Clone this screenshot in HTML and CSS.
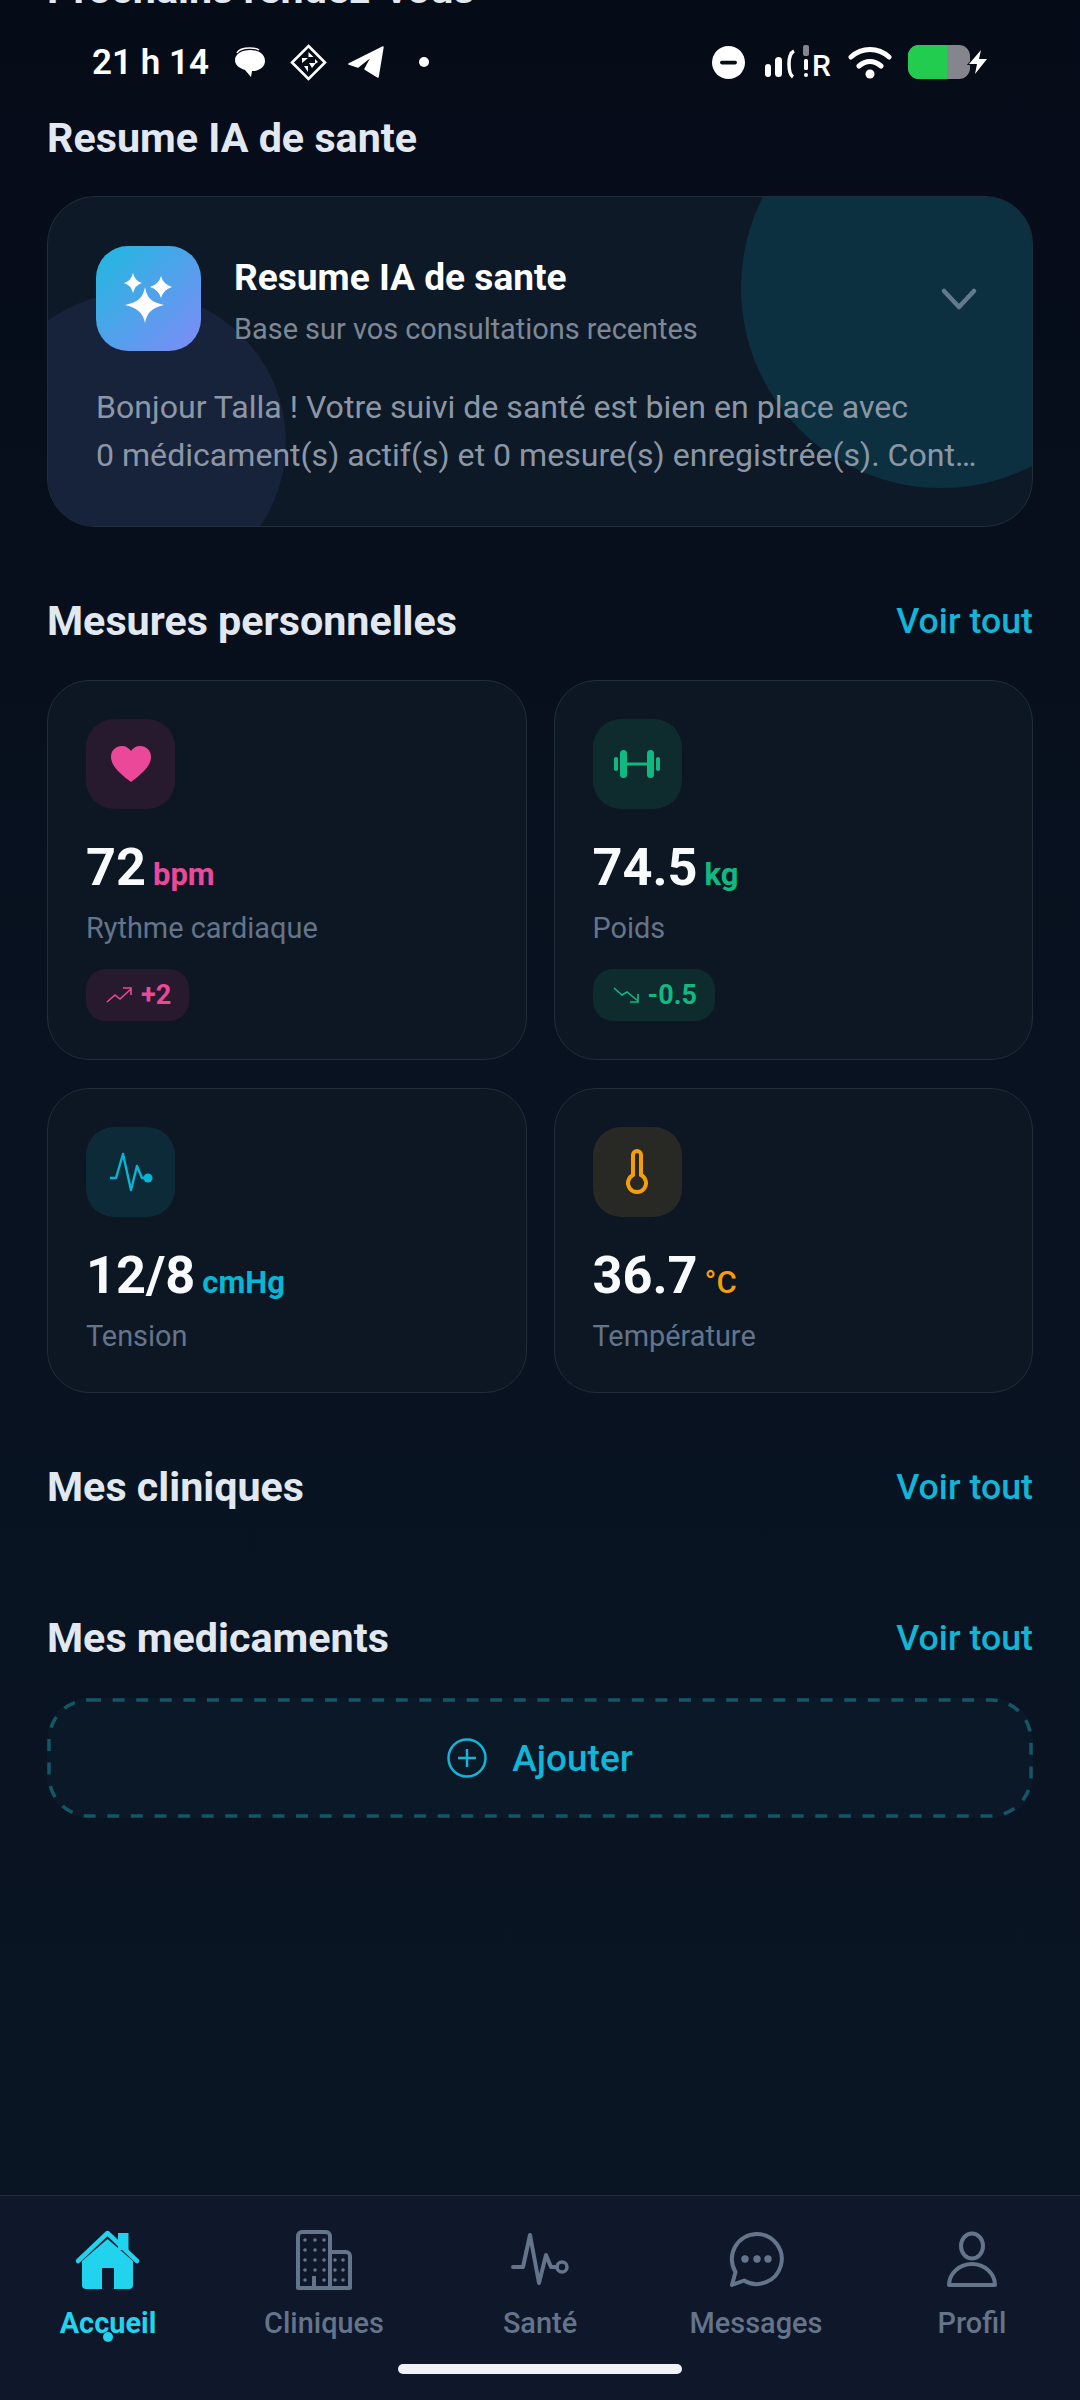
FILE: index.html
```html
<!doctype html>
<html lang="fr">
<head>
<meta charset="utf-8">
<title>Accueil</title>
<link rel="stylesheet" href="styles.css">
</head>
<body>

<!-- barre d'etat, au dessus du contenu qui defile -->
<div class="statusbar">
  <span class="time">21 h 14</span>
  <svg class="st-chat" width="30" height="30" viewBox="0 0 30 30"><path d="M2 6C4 2 9 1 15 1c4 0 7 0 9 2" fill="none" stroke="#fff" stroke-width="1.6"/><path d="M15 3c8 0 15 4 15 11 0 6-6 10-12 10h-1l-1 6-6-7C4 21 0 18 0 13 0 7 7 3 15 3z" fill="#fff"/></svg>
  <svg class="st-diamond" width="37" height="37" viewBox="0 0 37 37"><path d="M18.500 2 35 18.500 18.500 35 2 18.500z" fill="none" stroke="#fff" stroke-width="2.600"/><path d="M18.500 8l5 5h-5zM12 14h6l-6 5zM19 19h7l-4 5zM14 22l4 0 0 6zM25 15l3 3-3 2z" fill="#fff"/></svg>
  <svg class="st-plane" width="37" height="32" viewBox="0 0 37 32"><path d="M1 18 35 1 30 31 17 23 24 10 10 21z" fill="#fff" stroke="#fff" stroke-width="1.500" stroke-linejoin="round"/></svg>
  <span class="st-dot"></span>

  <div class="st-right">
    <svg width="33" height="33" viewBox="0 0 33 33"><circle cx="16.500" cy="16.500" r="16.500" fill="#fff"/><rect x="8" y="14.800" width="17" height="3.600" rx="1.800" fill="#060b18"/></svg>
    <div class="st-signal">
      <svg width="46" height="34" viewBox="0 0 46 34"><rect x="1" y="19" width="6" height="13" rx="3" fill="#fff"/><rect x="11" y="12" width="7" height="20" rx="3.500" fill="#fff"/><path d="M30 6c-4 2-5 7-5 13s1 11 4 13" fill="none" stroke="#fff" stroke-width="3.500"/><rect x="39" y="0" width="6" height="11" rx="2" fill="#85858d"/><rect x="40" y="14" width="4" height="11" rx="1.500" fill="#fff"/><rect x="40" y="28" width="4" height="4" rx="2" fill="#fff"/></svg>
      <span class="st-r">R</span>
    </div>
    <svg width="44" height="33" viewBox="0 0 44 33"><path d="M3 11C14 1 30 1 41 11M11 20c7-6 15-6 22 0" fill="none" stroke="#fff" stroke-width="5" stroke-linecap="round"/><circle cx="22" cy="28" r="4.500" fill="#fff"/></svg>
    <div class="battery"><div class="battery-fill"></div></div>
    <svg class="st-bolt" width="24" height="28" viewBox="0 0 24 28"><path d="M15 2 3 16h8l-2 10 12-15h-8z" fill="#fff" stroke="#060b18" stroke-width="2" paint-order="stroke"/></svg>
  </div>
</div>

<div class="scroll">

  <h2 class="section-title">Prochains rendez-vous</h2>

  <h2 class="section-title ai-title">Resume IA de sante</h2>

  <div class="ai-card">
    <div class="blob blob-teal"></div>
    <div class="blob blob-navy"></div>
    <div class="ai-head">
      <div class="ai-icon">
        <svg width="105" height="105" viewBox="0 0 105 105"><path d="M49 41C51 52 55 56 68 59 55 62 51 67 49 77 47 67 42 62 29 59 42 56 47 52 49 41z" fill="#fff"/><path d="M37 27Q39 35 46 37 39 39 37 47 35 39 28 37 35 35 37 27z" fill="#fff"/><path d="M65 30Q67 38 76 41 67 44 65 52 63 44 54 41 63 38 65 30z" fill="#fff"/></svg>
      </div>
      <div class="ai-text">
        <div class="ai-name">Resume IA de sante</div>
        <div class="ai-sub">Base sur vos consultations recentes</div>
      </div>
      <svg class="ai-chevron" width="48" height="48" viewBox="0 0 48 48"><path d="M8 16 23 32 38 16" fill="none" stroke="#64798a" stroke-width="4.500" stroke-linecap="round" stroke-linejoin="round"/></svg>
    </div>
    <div class="ai-body">
      <div class="ai-line">Bonjour Talla ! Votre suivi de santé est bien en place avec</div>
      <div class="ai-line">0 médicament(s) actif(s) et 0 mesure(s) enregistrée(s). Continuez ainsi.</div>
    </div>
  </div>

  <div class="section-head">
    <h2 class="section-title">Mesures personnelles</h2>
    <span class="see-all">Voir tout</span>
  </div>

  <div class="metrics">
    <div class="metric">
      <div class="metric-icon bg-pink">
        <svg width="40" height="36" viewBox="0 0 40 36"><path d="M20 36C12 30 0 21 0 11 0 4 5 0 11 0c4 0 7 2 9 5 2-3 5-5 9-5 6 0 11 4 11 11 0 10-12 19-20 25z" fill="#ec4899"/></svg>
      </div>
      <div class="metric-value">72<span class="unit c-pink">bpm</span></div>
      <div class="metric-label">Rythme cardiaque</div>
      <div class="trend bg-pink c-pink">
        <svg width="26" height="16" viewBox="0 0 26 16"><path d="M1 15 9 8l5 4L25 2M17 1h8v7" fill="none" stroke="#ec4899" stroke-width="1.600"/></svg>
        +2
      </div>
    </div>

    <div class="metric">
      <div class="metric-icon bg-green">
        <svg width="46" height="28" viewBox="0 0 46 28"><g fill="#10b981"><rect x="0" y="7" width="4" height="14" rx="2"/><rect x="6" y="0" width="7" height="28" rx="3.500"/><rect x="12" y="12.500" width="22" height="3"/><rect x="33" y="0" width="7" height="28" rx="3.500"/><rect x="42" y="7" width="4" height="14" rx="2"/></g></svg>
      </div>
      <div class="metric-value">74.5<span class="unit c-green">kg</span></div>
      <div class="metric-label">Poids</div>
      <div class="trend bg-green c-green">
        <svg width="26" height="16" viewBox="0 0 26 16"><path d="M1 1l8 7 5-3 11 9M25 7v8h-8" fill="none" stroke="#10b981" stroke-width="1.600"/></svg>
        -0.5
      </div>
    </div>

    <div class="metric">
      <div class="metric-icon bg-cyan">
        <svg width="44" height="40" viewBox="0 0 44 40"><path d="M1 26h6L14 2l8 36 6-24 5 12h5" fill="none" stroke="#06b6d4" stroke-width="2.400" stroke-linejoin="round"/><circle cx="39" cy="26" r="4.500" fill="#06b6d4"/></svg>
      </div>
      <div class="metric-value">12/8<span class="unit c-cyan">cmHg</span></div>
      <div class="metric-label">Tension</div>
    </div>

    <div class="metric">
      <div class="metric-icon bg-amber">
        <svg width="22" height="46" viewBox="0 0 22 46"><path d="M7 26V6a4 4 0 0 1 8 0v20a9 9 0 1 1-8 0z" fill="none" stroke="#f59e0b" stroke-width="4"/></svg>
      </div>
      <div class="metric-value">36.7<span class="unit c-amber thin">°C</span></div>
      <div class="metric-label">Température</div>
    </div>
  </div>

  <div class="section-head">
    <h2 class="section-title">Mes cliniques</h2>
    <span class="see-all">Voir tout</span>
  </div>
  <div class="clinic-list"></div>

  <div class="section-head">
    <h2 class="section-title">Mes medicaments</h2>
    <span class="see-all">Voir tout</span>
  </div>

  <div class="add-btn">
    <svg class="add-dash" width="986" height="120" viewBox="0 0 986 120"><rect x="2" y="2" width="982" height="116" rx="40" fill="none" stroke="#135666" stroke-width="3.500" stroke-dasharray="12 11.600"/></svg>
    <svg width="40" height="40" viewBox="0 0 40 40"><circle cx="20" cy="20" r="18.500" fill="none" stroke="#12b5d6" stroke-width="2.500"/><path d="M20 11v18M11 20h18" stroke="#12b5d6" stroke-width="2.500"/></svg>
    Ajouter
  </div>

</div>

<nav class="tabbar">
  <div class="tabs">
    <div class="tab tab-active">
      <svg width="64" height="60" viewBox="0 0 64 60"><path d="M42 3h10.500v17H42z" fill="#22d3ee"/><path d="M2 31 31.500 3 61 31" fill="none" stroke="#22d3ee" stroke-width="4.500" stroke-linecap="round" stroke-linejoin="round" /><path fill-rule="evenodd" d="M6 31 31.500 9 57 31v24a4 4 0 0 1-4 4H10a4 4 0 0 1-4-4zM26 38h12v21H26z" fill="#22d3ee"/></svg>
      <span>Accueil</span>
      <i class="tab-dot"></i>
    </div>
    <div class="tab">
      <svg width="60" height="60" viewBox="0 0 60 60"><g fill="none" stroke="#64748b"><path d="M4 58V6a4 4 0 0 1 4-4h24a4 4 0 0 1 4 4v52zM36 22h16a4 4 0 0 1 4 4v32H36z" stroke-width="4" stroke-linejoin="round"/><path d="M20 46v10" stroke-width="4"/><path d="M11 10h0M21 10h0M30 10h0M11 20h0M21 20h0M30 20h0M11 30h0M21 30h0M30 30h0M11 40h0M21 40h0M30 40h0M11 50h0M30 50h0M41 30h0M49 30h0M41 40h0M49 40h0M41 50h0M49 50h0" stroke-width="3.600" stroke-linecap="round"/></g></svg>
      <span>Cliniques</span>
    </div>
    <div class="tab">
      <svg width="60" height="60" viewBox="0 0 60 60"><path d="M3 37h10l7-32 9 48 7-28 5 12h6" fill="none" stroke="#64748b" stroke-width="4" stroke-linecap="round" stroke-linejoin="round"/><circle cx="52" cy="37" r="5" fill="none" stroke="#64748b" stroke-width="3.500"/></svg>
      <span>Santé</span>
    </div>
    <div class="tab">
      <svg width="60" height="60" viewBox="0 0 60 60"><path d="M31 4A25 25 0 1 1 18 50.500L6 55 9.500 42A25 25 0 0 1 31 4z" fill="none" stroke="#64748b" stroke-width="4" stroke-linejoin="round"/><circle cx="19" cy="29" r="3.700" fill="#64748b"/><circle cx="31" cy="29" r="3.700" fill="#64748b"/><circle cx="42" cy="29" r="3.700" fill="#64748b"/></svg>
      <span>Messages</span>
    </div>
    <div class="tab">
      <svg width="60" height="60" viewBox="0 0 60 60"><ellipse cx="30" cy="16" rx="11" ry="12.500" fill="none" stroke="#64748b" stroke-width="4"/><path d="M7 55A23 21 0 0 1 53 55z" fill="none" stroke="#64748b" stroke-width="4" stroke-linejoin="round"/></svg>
      <span>Profil</span>
    </div>
  </div>
  <div class="home-bar"></div>
</nav>

</body>
</html>
```

FILE: styles.css
```css
*{
box-sizing:border-box;
}
html,body{
margin:0;
height:2400px;
}
body{
position:relative;
display:flex;
flex-direction:column;
overflow:hidden;
color:#fff;
background:linear-gradient(180deg,#060b18 0%,#081220 45%,#0a1524 100%);
font-family:Roboto,"Noto Sans",sans-serif;
}

/* barre d'etat */
.statusbar{
position:absolute;
top:0;
left:0;
right:0;
height:124px;
padding:0 90px 0 92px;
display:flex;
align-items:center;
}
.time{
font-size:35px;
font-weight:600;
}
.st-chat{
margin-left:26px;
}
.st-diamond{
margin-left:25px;
}
.st-plane{
margin-left:21px;
}
.st-dot{
width:10px;
height:10px;
margin-left:34px;
border-radius:50%;
background:#fff;
}
.st-right{
margin-left:auto;
display:flex;
align-items:center;
}
.st-signal{
display:flex;
align-items:flex-end;
margin-left:19px;
margin-right:17px;
}
.st-r{
margin-left:2px;
font-size:30px;
line-height:26px;
font-weight:500;
}
.battery{
width:62px;
height:34px;
margin-left:16px;
border-radius:11px;
overflow:hidden;
background:#85858d;
}
.battery-fill{
width:39px;
height:100%;
background:#22cc4e;
}
.st-bolt{
margin-left:-4px;
position:relative;
}

/* contenu */
.scroll{
flex:1;
margin-top:-35px;
padding:0 47px;
}
.section-title{
margin:0;
font-size:41.25px;
line-height:48px;
font-weight:700;
color:#e2e8f0;
}
.ai-title{
margin-top:101px;
}
.section-head{
display:flex;
justify-content:space-between;
align-items:center;
margin-top:70px;
}
.see-all{
font-size:35.75px;
font-weight:500;
color:#12b5d6;
}

.ai-card{
position:relative;
overflow:hidden;
height:331px;
margin-top:34px;
padding:49px 48px 0 48px;
border:1px solid #202d3b;
border-radius:48px;
background:#0d1926;
}
.blob{
position:absolute;
border-radius:50%;
}
.blob-teal{
width:400px;
height:400px;
right:-109px;
top:-109px;
background:#0c3040;
}
.blob-navy{
width:300px;
height:300px;
left:-62px;
bottom:-66px;
background:#17233a;
}
.ai-head{
position:relative;
display:flex;
align-items:center;
}
.ai-icon{
width:105px;
height:105px;
border-radius:32px;
background:linear-gradient(135deg,#1fb9df,#7f8bf7);
}
.ai-icon svg{
display:block;
}
.ai-text{
margin-left:33px;
padding-top:6px;
}
.ai-name{
font-size:37.1px;
line-height:44px;
font-weight:700;
}
.ai-sub{
margin-top:11px;
font-size:28.9px;
line-height:36px;
color:#7d8796;
}
.ai-chevron{
margin-left:auto;
}
.ai-body{
position:relative;
margin-top:32px;
font-size:32.1px;
line-height:48px;
color:#8c97a6;
}
.ai-line{
white-space:nowrap;
overflow:hidden;
text-overflow:ellipsis;
}

.metrics{
display:grid;
grid-template-columns:1fr 1fr;
column-gap:27px;
row-gap:28px;
margin-top:35px;
}
.metric{
padding:38px;
border:1px solid #202d3b;
border-radius:42px;
background:#0c1723;
}
.metric-icon{
display:flex;
align-items:center;
justify-content:center;
width:89px;
height:90px;
border-radius:28px;
}
.metric-value{
margin-top:29px;
font-size:52.25px;
line-height:60px;
font-weight:700;
color:#f8fafc;
}
.unit{
margin-left:7px;
font-size:31px;
line-height:1;
font-weight:700;
}
.unit.thin{
font-weight:500;
}
.metric-label{
margin-top:12px;
font-size:28.9px;
line-height:36px;
color:#64748b;
}
.trend{
display:inline-flex;
align-items:center;
gap:9px;
height:52px;
margin-top:23px;
padding:0 18px 0 20px;
border-radius:20px;
font-size:27px;
font-weight:700;
}
.bg-pink{
background:#271a2e;
}
.bg-green{
background:#0e2b2e;
}
.bg-cyan{
background:#0d2a38;
}
.bg-amber{
background:#282824;
}
.c-pink{
color:#ec4899;
}
.c-green{
color:#10b981;
}
.c-cyan{
color:#06b6d4;
}
.c-amber{
color:#f59e0b;
}

.clinic-list{
height:33px;
}

.add-btn{
position:relative;
display:flex;
align-items:center;
justify-content:center;
gap:25px;
height:120px;
margin-top:36px;
border-radius:40px;
background:#0a1828;
font-size:37px;
font-weight:500;
color:#12b5d6;
}
.add-dash{
position:absolute;
top:0;
left:0;
}

/* barre de navigation */
.tabbar{
height:205px;
padding-top:34px;
border-top:1px solid #1e293b;
background:#0f172a;
}
.tabs{
display:flex;
}
.tab{
position:relative;
flex:1;
display:flex;
flex-direction:column;
align-items:center;
font-size:28.9px;
line-height:36px;
font-weight:500;
color:#64748b;
}
.tab svg{
display:block;
margin-bottom:15px;
}
.tab-active{
color:#22d3ee;
font-weight:700;
}
.tab-dot{
position:absolute;
left:103px;
top:102px;
width:10px;
height:10px;
border-radius:50%;
background:#22d3ee;
}
.home-bar{
width:284px;
height:10px;
margin:23px auto 0 auto;
border-radius:5px;
background:#f0f2f5;
}
```
